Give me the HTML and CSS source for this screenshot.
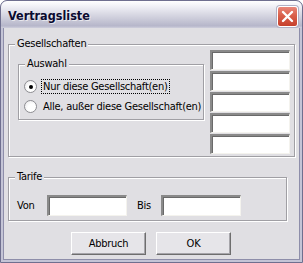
FILE: index.html
```html
<!DOCTYPE html>
<html>
<head>
<meta charset="utf-8">
<link rel="stylesheet" href="styles.css">
</head>
<body>
<div class="window">
  <div class="titlebar">
    <span class="title">Vertragsliste</span>
    <div class="close">
      <svg width="13" height="13" viewBox="0 0 13 13"><path d="M2 2 L11 11 M11 2 L2 11" stroke="#fff" stroke-width="2.4" stroke-linecap="round" fill="none"/></svg>
    </div>
  </div>
  <div class="client">
    <div class="group ges">
      <span class="legend">Gesellschaften</span>
      <div class="group auswahl">
        <span class="legend">Auswahl</span>
        <div class="radio-row">
          <span class="radio checked"></span>
          <span class="rlabel focus">Nur diese Gesellschaft(en)</span>
        </div>
        <div class="radio-row">
          <span class="radio"></span>
          <span class="rlabel">Alle, außer diese Gesellschaft(en)</span>
        </div>
      </div>
      <div class="list">
        <div class="field f-list"></div>
        <div class="field f-list"></div>
        <div class="field f-list"></div>
        <div class="field f-list"></div>
        <div class="field f-list"></div>
      </div>
    </div>
    <div class="group tarife">
      <span class="legend">Tarife</span>
      <span class="lbl von">Von</span>
      <div class="field f-tarif"></div>
      <span class="lbl bis">Bis</span>
      <div class="field f-tarif"></div>
    </div>
    <div class="buttons">
      <div class="btn">Abbruch</div>
      <div class="btn">OK</div>
    </div>
  </div>
</div>
</body>
</html>
```

FILE: styles.css
```css
html, body {
  margin: 0;
  padding: 0;
  background: #ffffff;
}
body {
  font-family: "DejaVu Sans Condensed", "DejaVu Sans", "Liberation Sans", sans-serif;
  font-size: 11px;
  letter-spacing: -0.25px;
  color: #000;
}
.window {
  width: 303px;
  height: 263px;
  box-sizing: border-box;
  border: 1px solid #6f6f8f;
  border-radius: 7px 7px 0 0;
  background: #c4c4d6;
  display: flex;
  flex-direction: column;
  overflow: hidden;
}
.titlebar {
  height: 27px;
  flex: none;
  display: flex;
  align-items: center;
  justify-content: space-between;
  padding: 0 4px 0 7px;
  background: linear-gradient(to bottom, #ffffff 0%, #f0f0f6 20%, #dcdce6 45%, #c4c4d4 75%, #b6b6ca 92%, #cfcfdc 100%);
  border-radius: 6px 6px 0 0;
}
.title {
  font-weight: bold;
  font-size: 12.5px;
  letter-spacing: 0;
  color: #0a0a30;
  text-shadow: 1px 1px 0 rgba(255,255,255,0.6);
  margin-top: 2px;
}
.close {
  width: 19px;
  height: 19px;
  margin-top: 3px;
  border: 1px solid #ffffff;
  border-radius: 3px;
  background: linear-gradient(to bottom, #e9877a 0%, #d9604b 45%, #c6402c 100%);
  display: flex;
  align-items: center;
  justify-content: center;
  box-shadow: 0 0 0 1px #b0b0c4;
}
.client {
  flex: 1;
  margin: 0 2px 2px 2px;
  background: #e0dfe3;
  border: 1px solid #8e8eaa;
  border-top: none;
  padding: 16px 0 0 4px;
  display: flex;
  flex-direction: column;
}
.group {
  position: relative;
  box-sizing: border-box;
  border: 1px solid #a09fa4;
  box-shadow: inset 1px 1px 0 #ffffff, 1px 1px 0 #ffffff;
}
.legend {
  position: absolute;
  top: -8px;
  left: 6px;
  padding: 0 2px;
  background: #e0dfe3;
  line-height: 14px;
}
.ges {
  width: 287px;
  height: 113px;
  display: flex;
  align-items: flex-start;
  padding: 5px 0 0 9px;
}
.auswahl {
  width: 186px;
  height: 56px;
  margin-top: 14px;
  margin-right: 6px;
  padding: 15px 0 0 5px;
  display: flex;
  flex-direction: column;
  gap: 7px;
}
.radio-row {
  display: flex;
  align-items: center;
  height: 13px;
}
.radio {
  width: 11px;
  height: 11px;
  border-radius: 50%;
  border: 1px solid #8d8d92;
  background: radial-gradient(circle at 65% 65%, #ffffff 0%, #ffffff 40%, #e4e3e6 100%);
  flex: none;
  display: flex;
  align-items: center;
  justify-content: center;
  margin-right: 4px;
}
.radio.checked::after {
  content: "";
  width: 4px;
  height: 4px;
  border-radius: 50%;
  background: #000;
}
.rlabel {
  padding: 0 1px;
  line-height: 13px;
  border: 1px dotted transparent;
  white-space: nowrap;
}
.rlabel.focus {
  border-color: #000;
}
.list {
  display: flex;
  flex-direction: column;
  gap: 1px;
}
.field {
  box-sizing: border-box;
  background: #ffffff;
  border-style: solid;
  border-width: 2px 1px 1px 2px;
  border-color: #8a8a8a #f4f3ee #f4f3ee #8a8a8a;
  box-shadow: inset 1px 1px 0 #6a6a6a;
}
.f-list {
  width: 80px;
  height: 20px;
}
.tarife {
  width: 279px;
  height: 44px;
  margin-top: 20px;
  display: flex;
  align-items: center;
  padding: 12px 0 0 8px;
}
.von {
  width: 30px;
}
.bis {
  width: 24px;
  margin-left: 10px;
}
.f-tarif {
  width: 80px;
  height: 21px;
}
.buttons {
  display: flex;
  gap: 10px;
  margin-top: 11px;
  padding-left: 63px;
}
.btn {
  width: 75px;
  height: 23px;
  box-sizing: border-box;
  border-style: solid;
  border-width: 1px;
  border-color: #ffffff #6e6e6e #6e6e6e #ffffff;
  box-shadow: inset -1px -1px 0 #a6a5aa;
  background: #e6e5e9;
  display: flex;
  align-items: center;
  justify-content: center;
}
```
